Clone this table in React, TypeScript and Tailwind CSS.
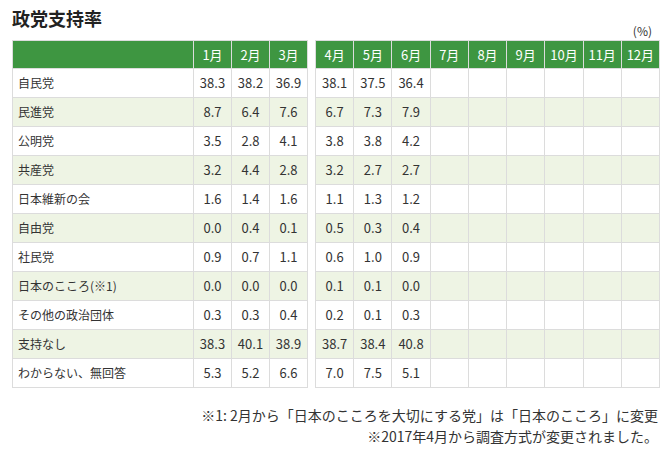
const LEFT_MONTHS = ['1月', '2月', '3月']
const RIGHT_MONTHS = ['4月', '5月', '6月', '7月', '8月', '9月', '10月', '11月', '12月']

const ROWS: [string, string[]][] = [
  ['自民党', ['38.3', '38.2', '36.9', '38.1', '37.5', '36.4']],
  ['民進党', ['8.7', '6.4', '7.6', '6.7', '7.3', '7.9']],
  ['公明党', ['3.5', '2.8', '4.1', '3.8', '3.8', '4.2']],
  ['共産党', ['3.2', '4.4', '2.8', '3.2', '2.7', '2.7']],
  ['日本維新の会', ['1.6', '1.4', '1.6', '1.1', '1.3', '1.2']],
  ['自由党', ['0.0', '0.4', '0.1', '0.5', '0.3', '0.4']],
  ['社民党', ['0.9', '0.7', '1.1', '0.6', '1.0', '0.9']],
  ['日本のこころ(※1)', ['0.0', '0.0', '0.0', '0.1', '0.1', '0.0']],
  ['その他の政治団体', ['0.3', '0.3', '0.4', '0.2', '0.1', '0.3']],
  ['支持なし', ['38.3', '40.1', '38.9', '38.7', '38.4', '40.8']],
  ['わからない、無回答', ['5.3', '5.2', '6.6', '7.0', '7.5', '5.1']],
]

const th = 'h-[28px] p-0 border border-[#dcdcdc] bg-[#3e9641] text-white font-normal text-center'
const td = 'h-[29px] p-0 border border-[#dcdcdc] text-center'

function rowBg(i: number) {
  return i % 2 === 1 ? 'bg-[#eef4e4]' : 'bg-white'
}

function LeftTable() {
  return (
    <table className="table-fixed border-collapse w-[296px]">
      <colgroup>
        <col className="w-[181px]" />
        <col className="w-[38px]" />
        <col className="w-[38px]" />
        <col className="w-[38px]" />
      </colgroup>
      <thead>
        <tr>
          <th className={th}></th>
          {LEFT_MONTHS.map((m) => (
            <th key={m} className={th}>{m}</th>
          ))}
        </tr>
      </thead>
      <tbody>
        {ROWS.map(([name, vals], i) => (
          <tr key={name} className={rowBg(i)}>
            <td className="h-[29px] p-0 pl-[5px] border border-[#dcdcdc] text-left text-[12px]">{name}</td>
            {vals.slice(0, 3).map((v, j) => (
              <td key={j} className={td}>{v}</td>
            ))}
          </tr>
        ))}
      </tbody>
    </table>
  )
}

function RightTable() {
  return (
    <table className="table-fixed border-collapse w-[345px]">
      <thead>
        <tr>
          {RIGHT_MONTHS.map((m) => (
            <th key={m} className={th}>{m}</th>
          ))}
        </tr>
      </thead>
      <tbody>
        {ROWS.map(([name, vals], i) => (
          <tr key={name} className={rowBg(i)}>
            {RIGHT_MONTHS.map((m, j) => (
              <td key={m} className={td}>{vals[j + 3] ?? ''}</td>
            ))}
          </tr>
        ))}
      </tbody>
    </table>
  )
}

export default function App() {
  return (
    <div
      className="w-[663px] h-[454px] bg-white text-[#333] text-[13px] pt-[7px] pl-[12px]"
      style={{ fontFamily: '"Noto Sans CJK JP", "Noto Sans", sans-serif' }}
    >
      <h2 className="text-[18px] leading-[22px] h-[22px] font-bold text-[#222]">政党支持率</h2>
      <div className="-mt-[4px] h-[12px] leading-[12px] text-[12px] text-right pr-[11px]">(%)</div>
      <div className="mt-[3px] flex gap-[7px]">
        <LeftTable />
        <RightTable />
      </div>
      <div className="mt-[17px] pr-[5px] text-right text-[14px] leading-[21px]">
        <p>※1: 2月から「日本のこころを大切にする党」は「日本のこころ」に変更</p>
        <p>※2017年4月から調査方式が変更されました。</p>
      </div>
    </div>
  )
}
